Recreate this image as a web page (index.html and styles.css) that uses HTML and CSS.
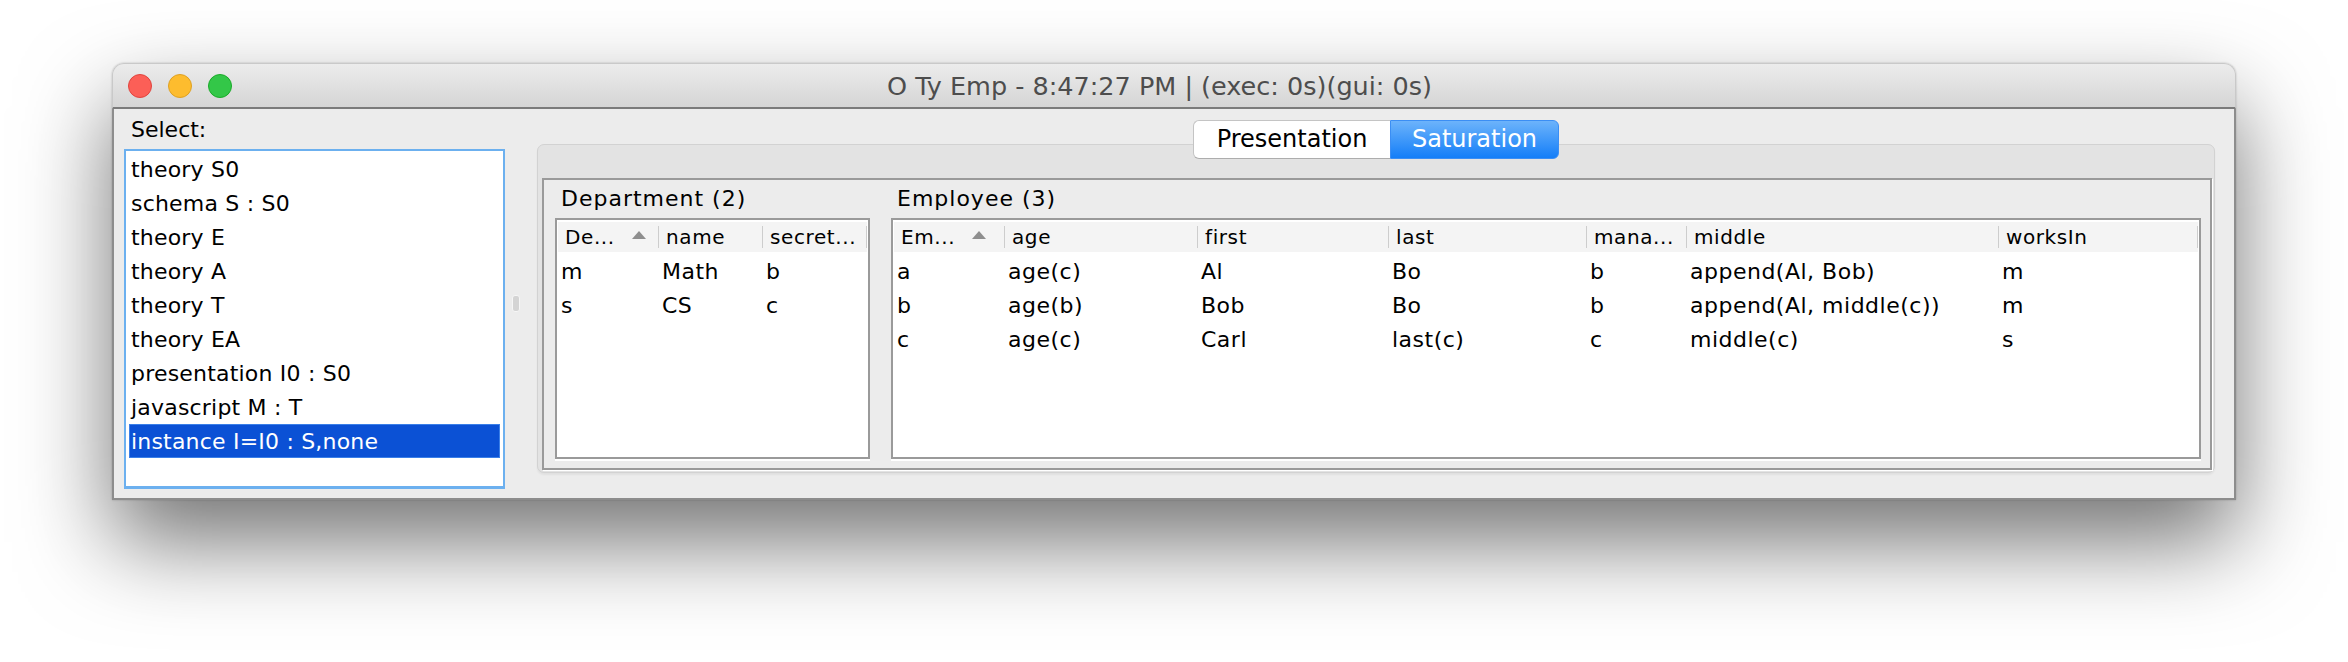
FILE: index.html
```html
<!DOCTYPE html>
<html>
<head>
<meta charset="utf-8">
<title>O Ty Emp</title>
<link rel="stylesheet" href="styles.css">
</head>
<body>
<div class="screen">
  <div class="window">
    <div class="titlebar">
      <div class="lights">
        <span class="light red"></span>
        <span class="light yellow"></span>
        <span class="light green"></span>
      </div>
      <div class="title">O Ty Emp - 8:47:27 PM | (exec: 0s)(gui: 0s)</div>
      <div class="title-spacer"></div>
    </div>
    <div class="content">
      <div class="left">
        <div class="select-label">Select:</div>
        <div class="list">
          <div class="item">theory S0</div>
          <div class="item">schema S : S0</div>
          <div class="item">theory E</div>
          <div class="item">theory A</div>
          <div class="item">theory T</div>
          <div class="item">theory EA</div>
          <div class="item">presentation I0 : S0</div>
          <div class="item">javascript M : T</div>
          <div class="item selected">instance I=I0 : S,none</div>
        </div>
      </div>
      <div class="splitter"><div class="handle"></div></div>
      <div class="right">
        <div class="tabs">
          <div class="tab first">Presentation</div>
          <div class="tab active">Saturation</div>
        </div>
        <div class="tabpanel">
          <div class="etched">
            <div class="section dept">
              <div class="section-title">Department (2)</div>
              <div class="tablebox">
                <div class="grid dept-grid">
                  <div class="th">De...<span class="sort"></span></div>
                  <div class="th">name</div>
                  <div class="th">secret...</div>
                  <div class="td">m</div><div class="td">Math</div><div class="td">b</div>
                  <div class="td">s</div><div class="td">CS</div><div class="td">c</div>
                </div>
              </div>
            </div>
            <div class="section emp">
              <div class="section-title">Employee (3)</div>
              <div class="tablebox">
                <div class="grid emp-grid">
                  <div class="th">Em...<span class="sort"></span></div>
                  <div class="th">age</div>
                  <div class="th">first</div>
                  <div class="th">last</div>
                  <div class="th">mana...</div>
                  <div class="th">middle</div>
                  <div class="th">worksIn</div>
                  <div class="td">a</div><div class="td">age(c)</div><div class="td">Al</div><div class="td">Bo</div><div class="td">b</div><div class="td">append(Al, Bob)</div><div class="td">m</div>
                  <div class="td">b</div><div class="td">age(b)</div><div class="td">Bob</div><div class="td">Bo</div><div class="td">b</div><div class="td">append(Al, middle(c))</div><div class="td">m</div>
                  <div class="td">c</div><div class="td">age(c)</div><div class="td">Carl</div><div class="td">last(c)</div><div class="td">c</div><div class="td">middle(c)</div><div class="td">s</div>
                </div>
              </div>
            </div>
          </div>
        </div>
      </div>
    </div>
  </div>
</div>
</body>
</html>
```
FILE: styles.css
```css
* { box-sizing: border-box; }
html, body { margin: 0; padding: 0; background: #ffffff; }
body { font-family: "DejaVu Sans", "Verdana", sans-serif; color: #000; }

.screen { width: 2348px; height: 662px; padding: 63px 0 0 112px; overflow: hidden; }

.window {
  width: 2124px;
  border-radius: 12px 12px 0 0;
  box-shadow: 0 42px 90px rgba(0,0,0,0.55), 0 0 2px rgba(0,0,0,0.25);
}

.titlebar {
  height: 46px;
  display: grid;
  grid-template-columns: 1fr auto 1fr;
  align-items: center;
  padding: 0 44px 0 15px;
  border: 1px solid #c9c9c9;
  border-bottom: 2px solid #7b7b7b;
  border-radius: 12px 12px 0 0;
  background: linear-gradient(#ececec, #d5d5d5);
}
.lights { display: flex; gap: 16px; }
.light { width: 24px; height: 24px; border-radius: 50%; border: 1px solid; }
.light.red { background: #fc5f57; border-color: #e0443e; }
.light.yellow { background: #fdbc2e; border-color: #dea123; }
.light.green { background: #33c748; border-color: #1aab29; }
.title { font-size: 25.5px; color: #4d4d4d; white-space: nowrap; }

.content {
  display: flex;
  height: 391px;
  border: 2px solid #8d8d8d;
  border-top: none;
  background: #ececec;
}

.left { width: 391px; flex: none; padding: 7px 0 0 10px; }
.select-label { font-size: 22px; line-height: 28px; height: 28px; margin-bottom: 5px; padding-left: 7px; }
.list {
  height: 340px;
  border: 2px solid #6cb0ef;
  border-bottom-width: 3px;
  background: #fff;
  padding-top: 1px;
}
.item {
  height: 34px;
  line-height: 30px;
  padding-top: 2px;
  margin: 0 3px;
  padding-left: 1px;
  border: 1px solid transparent;
  font-size: 22px;
  letter-spacing: 0.2px;
  white-space: nowrap;
}
.item.selected { background: #0b51d5; border-color: #3a7fe8; color: #fff; }

.splitter { width: 32px; flex: none; display: flex; align-items: center; padding-left: 7px; }
.handle {
  width: 8px; height: 17px;
  border-radius: 3px;
  background: #d4d4d4;
  border: 1px solid #f6f6f6;
}

.right { flex: 1; display: flex; flex-direction: column; padding: 11px 19px 0 0; }
.tabs { display: flex; justify-content: center; margin-bottom: -15px; position: relative; z-index: 1; }
.tab {
  height: 39px;
  font-size: 24px;
  line-height: 37px;
  text-align: center;
  border: 1px solid #c4c4c4;
  border-bottom-color: #adadad;
  background: #fff;
}
.tab.first { width: 197px; border-radius: 6px 0 0 6px; border-right: none; }
.tab.active {
  width: 169px;
  border-radius: 0 6px 6px 0;
  background: linear-gradient(#6cb3fb, #147ef8);
  border-color: #3b8ef4;
  color: #fff;
}

.tabpanel {
  height: 329px;
  flex: none;
  border: 1px solid #d2d2d2;
  border-radius: 7px;
  background: #e3e3e3;
  padding: 33px 2px 2px 4px;
  box-shadow: 0 2px 2px rgba(0,0,0,0.05);
}
.etched {
  border: 2px solid #9a9a9a;
  box-shadow: 1px 1px 0 #fff;
  background: #ececec;
  display: flex;
  gap: 21px;
  padding: 6px 9px 9px 11px;
}
.section { display: flex; flex-direction: column; }
.section.dept { width: 315px; flex: none; }
.section.emp { flex: 1; }
.section-title { font-size: 22px; line-height: 26px; padding-left: 6px; margin-bottom: 6px; letter-spacing: 1px; white-space: nowrap; }

.tablebox {
  height: 241px;
  border: 2px solid #9a9a9a;
  background: #fff;
  padding: 2px 1px 0;
  box-shadow: 0 2px 0 #fff;
}
.grid { display: grid; grid-template-rows: 33px; grid-auto-rows: 34px; }
.dept-grid { grid-template-columns: 101px 104px 1fr; }
.emp-grid { grid-template-columns: 111px 193px 191px 198px 100px 312px 1fr; }

.th {
  align-self: start;
  height: 30px;
  font-size: 20px;
  line-height: 30px;
  letter-spacing: 0.6px;
  padding-left: 7px;
  white-space: nowrap;
  overflow: hidden;
  background: linear-gradient(#cdcdcd, #cdcdcd) right 4px / 1px 22px no-repeat, #f4f4f4;
}
.td {
  font-size: 22px;
  line-height: 34px;
  letter-spacing: 0.5px;
  padding-left: 3px;
  white-space: nowrap;
}
.sort {
  display: inline-block;
  width: 0; height: 0;
  border-left: 7px solid transparent;
  border-right: 7px solid transparent;
  border-bottom: 8px solid #8e8e8e;
  margin-left: 17px;
  vertical-align: 5px;
}
```
